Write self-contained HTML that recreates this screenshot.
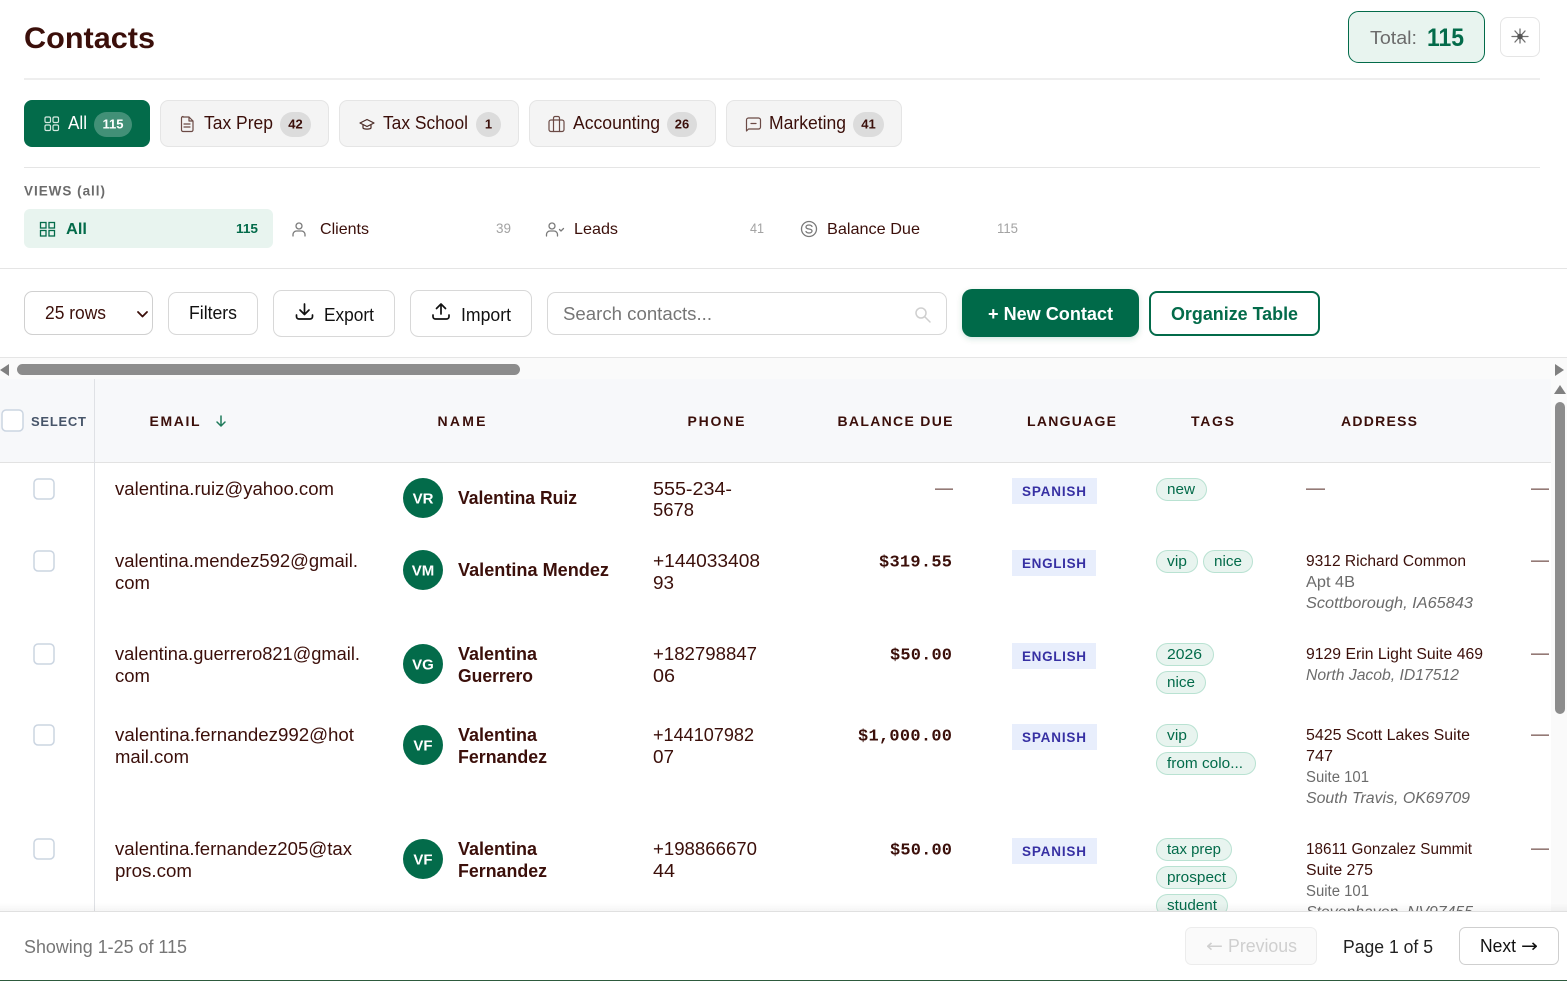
<!DOCTYPE html>
<html lang="en"><head><meta charset="utf-8"><title>Contacts</title>
<style>
html,body{margin:0;padding:0;background:#fff;width:1567px;height:981px;overflow:hidden}
svg{display:block}
text{font-family:"Liberation Sans",Arial,sans-serif;fill:#3b0f0a;font-size:18px;white-space:pre}
.b{font-weight:700}
.m{font-family:"Liberation Mono",monospace;font-weight:700;font-size:17px}
.h{font-weight:700;font-size:14px}
.t{font-size:14.5px;fill:#036b4a}
.l{font-weight:700;font-size:13.5px;fill:#3730a3}
.a{font-size:15.5px}
.g{fill:#6b6b6b}
.i{font-style:italic;fill:#6b6b6b}
.n{font-size:14px;fill:#a3a3a3}
.c{font-weight:700;font-size:13px;text-anchor:middle}
.av{font-weight:700;font-size:15px;fill:#fff;text-anchor:middle}
.ic{fill:none;stroke-linecap:round;stroke-linejoin:round}
</style></head><body>
<svg width="1567" height="981" viewBox="0 0 1567 981" xmlns="http://www.w3.org/2000/svg">
<defs><linearGradient id="fs" x1="0" y1="0" x2="0" y2="1"><stop offset="0" stop-color="#000" stop-opacity="0"/><stop offset="1" stop-color="#000" stop-opacity=".04"/></linearGradient>
<filter id="sh" x="-10%" y="-20%" width="120%" height="150%"><feDropShadow dx="0" dy="2" stdDeviation="3" flood-color="#036b4a" flood-opacity=".18"/></filter></defs>

<!-- Header -->
<text x="24" y="48" class="b" style="font-size:30px" textLength="131" lengthAdjust="spacingAndGlyphs">Contacts</text>
<rect x="1348.500" y="11.500" width="136" height="51" rx="10" fill="#e8f4ef" stroke="#036b4a"/>
<text x="1370" y="44" class="g" textLength="47" lengthAdjust="spacingAndGlyphs">Total:</text>
<text x="1427" y="46" class="b" style="font-size:25px;fill:#036b4a" textLength="37" lengthAdjust="spacingAndGlyphs">115</text>
<rect x="1500.500" y="17.500" width="39" height="39" rx="7" fill="#fff" stroke="#e5e5e5"/>
<g class="ic" stroke="#707070" stroke-width="1.300"><path d="M1520 29v14M1512 36.500h16M1515 31l10 11M1525 31l-10 11"/></g><circle cx="1520" cy="36.500" r="2.800" fill="#555"/>
<rect x="24" y="78" width="1516" height="2" fill="#eeeeee"/>

<!-- Tabs -->
<rect x="24" y="100" width="126" height="47" rx="8" fill="#036b4a"/>
<g class="ic" stroke="#d5e9e1" stroke-width="1.200"><rect x="45" y="117" width="5.500" height="5.500" rx="1.400"/><rect x="53" y="117" width="5.500" height="5.500" rx="1.400"/><rect x="45" y="125" width="5.500" height="5.500" rx="1.400"/><rect x="53" y="125" width="5.500" height="5.500" rx="1.400"/></g>
<text x="68" y="129" style="fill:#fff" textLength="19" lengthAdjust="spacingAndGlyphs">All</text>
<rect x="94" y="112" width="38" height="25" rx="12.500" fill="#fff" fill-opacity=".25"/>
<text x="113" y="128.500" class="c" style="fill:#fff">115</text>

<rect x="160.500" y="100.500" width="168" height="46" rx="8" fill="#f4f4f4" stroke="#e5e5e5"/>
<g class="ic" stroke="#6b4a45" stroke-width="1.200"><path d="M183 117h6l4 4v9a1.500 1.500 0 0 1-1.500 1.500h-8.500a1.500 1.500 0 0 1-1.500-1.500v-12a1.500 1.500 0 0 1 1.500-1.500zM189 117v4h4M184 124h6M184 127h6"/></g>
<text x="204" y="129" textLength="69" lengthAdjust="spacingAndGlyphs">Tax Prep</text>
<rect x="280" y="112" width="31" height="25" rx="12.500" fill="#dcdcdc"/><text x="295.500" y="128.500" class="c">42</text>

<rect x="339.500" y="100.500" width="179" height="46" rx="8" fill="#f4f4f4" stroke="#e5e5e5"/>
<g class="ic" stroke="#4a2a25" stroke-width="1.200"><path d="M360 123l7-3.500 7 3.500-7 3.500zM363 125v3c1 1.500 7 1.500 8 0v-3"/></g>
<text x="383" y="129" textLength="85" lengthAdjust="spacingAndGlyphs">Tax School</text>
<rect x="476" y="112" width="25" height="25" rx="12.500" fill="#dcdcdc"/><text x="488.500" y="128.500" class="c">1</text>

<rect x="529.500" y="100.500" width="186" height="46" rx="8" fill="#f4f4f4" stroke="#e5e5e5"/>
<g class="ic" stroke="#6b4a45" stroke-width="1.200"><rect x="549" y="120" width="15" height="11.500" rx="2"/><path d="M553.500 120v11.500M559.500 120v11.500M553.500 120v-2a1.500 1.500 0 0 1 1.500-1.500h3a1.500 1.500 0 0 1 1.500 1.500v2"/></g>
<text x="573" y="129" textLength="87" lengthAdjust="spacingAndGlyphs">Accounting</text>
<rect x="667" y="112" width="30" height="25" rx="12.500" fill="#dcdcdc"/><text x="682" y="128.500" class="c">26</text>

<rect x="726.500" y="100.500" width="175" height="46" rx="8" fill="#f4f4f4" stroke="#e5e5e5"/>
<g class="ic" stroke="#6b4a45" stroke-width="1.200"><path d="M748.500 118h10a2 2 0 0 1 2 2v7a2 2 0 0 1-2 2h-10l-2 2v-11a2 2 0 0 1 2-2zM751 123.500h5"/></g>
<text x="769" y="129" textLength="77" lengthAdjust="spacingAndGlyphs">Marketing</text>
<rect x="853" y="112" width="31" height="25" rx="12.500" fill="#dcdcdc"/><text x="868.500" y="128.500" class="c">41</text>

<rect x="24" y="167" width="1516" height="1" fill="#e5e5e5"/>

<!-- Views -->
<text x="24" y="195.500" class="b g" style="font-size:13.500px" textLength="81" lengthAdjust="spacing">VIEWS (all)</text>
<rect x="24" y="209" width="249" height="39" rx="6" fill="#e8f4ef"/>
<g fill="none" stroke="#036b4a" stroke-width="1.300"><rect x="40.500" y="222.500" width="5.500" height="5.500"/><rect x="49" y="222.500" width="5.500" height="5.500"/><rect x="40.500" y="230.500" width="5.500" height="5.500"/><rect x="49" y="230.500" width="5.500" height="5.500"/></g>
<text x="66" y="234" class="b" style="font-size:16px;fill:#036b4a" textLength="21" lengthAdjust="spacingAndGlyphs">All</text>
<text x="236" y="233" class="b" style="font-size:13px;fill:#036b4a" textLength="22" lengthAdjust="spacingAndGlyphs">115</text>
<g class="ic" stroke="#7a7a7a" stroke-width="1.300"><circle cx="299" cy="226" r="3"/><path d="M293 236v-1.500a3.500 3.500 0 0 1 3.500-3.500h5a3.500 3.500 0 0 1 3.500 3.500v1.500"/></g>
<text x="320" y="234" style="font-size:16px" textLength="49" lengthAdjust="spacingAndGlyphs">Clients</text>
<text x="496" y="233" class="n" textLength="15" lengthAdjust="spacingAndGlyphs">39</text>
<g class="ic" stroke="#7a7a7a" stroke-width="1.300"><circle cx="552" cy="226" r="3"/><path d="M546.500 236v-1.500a3.500 3.500 0 0 1 3.500-3.500h4a3.500 3.500 0 0 1 3.500 3.500v1.500M559.500 229.500l1.500 1.500 2.500-2.500"/></g>
<text x="574" y="234" style="font-size:16px" textLength="44" lengthAdjust="spacingAndGlyphs">Leads</text>
<text x="750" y="233" class="n" textLength="14" lengthAdjust="spacingAndGlyphs">41</text>
<g class="ic" stroke="#7a7a7a" stroke-width="1.300"><circle cx="809" cy="229" r="7.500"/><path d="M812 226.500c-.5-1-1.500-1.500-3-1.500-1.700 0-3 .8-3 2s1.300 1.800 3 2 3 .8 3 2-1.300 2-3 2c-1.500 0-2.500-.5-3-1.500"/></g>
<text x="827" y="234" style="font-size:16px" textLength="93" lengthAdjust="spacingAndGlyphs">Balance Due</text>
<text x="997" y="233" class="n" textLength="21" lengthAdjust="spacingAndGlyphs">115</text>
<rect x="0" y="268" width="1567" height="1" fill="#e5e5e5"/>

<!-- Toolbar -->
<rect x="24.500" y="291.500" width="128" height="43" rx="8" fill="#fff" stroke="#d0d0d0"/>
<text x="45" y="319" textLength="61" lengthAdjust="spacingAndGlyphs">25 rows</text>
<path class="ic" d="M138 312l4.500 4.500 4.500-4.500" stroke="#3b0f0a" stroke-width="1.800"/>
<rect x="168.500" y="292.500" width="89" height="42" rx="8" fill="#fff" stroke="#d8d8d8"/>
<text x="189" y="319" style="fill:#111" textLength="48" lengthAdjust="spacingAndGlyphs">Filters</text>
<rect x="273.500" y="290.500" width="121" height="46" rx="8" fill="#fff" stroke="#d8d8d8"/>
<g class="ic" stroke="#111" stroke-width="1.700"><path d="M304.500 304v10M300 310l4.500 4.500 4.500-4.500M296.500 315v1.500c0 1.500 1 2.500 2.500 2.500h11c1.500 0 2.500-1 2.500-2.500v-1.500"/></g>
<text x="324" y="321" style="fill:#111" textLength="50" lengthAdjust="spacingAndGlyphs">Export</text>
<rect x="410.500" y="290.500" width="121" height="46" rx="8" fill="#fff" stroke="#d8d8d8"/>
<g class="ic" stroke="#111" stroke-width="1.700"><path d="M441 314v-10M436.500 308.500l4.500-4.500 4.500 4.500M433 315v1.500c0 1.500 1 2.500 2.500 2.500h11c1.500 0 2.500-1 2.500-2.500v-1.500"/></g>
<text x="461" y="321" style="fill:#111" textLength="50" lengthAdjust="spacingAndGlyphs">Import</text>
<rect x="547.500" y="292.500" width="399" height="42" rx="8" fill="#fff" stroke="#d8d8d8"/>
<text x="563" y="320" style="fill:#767676" textLength="149" lengthAdjust="spacingAndGlyphs">Search contacts...</text>
<g class="ic" stroke="#cfcfcf" stroke-width="1.500"><circle cx="921" cy="313" r="5"/><path d="M925 317l5 5"/></g>
<rect x="962" y="289" width="177" height="48" rx="10" fill="#036b4a" filter="url(#sh)"/>
<text x="988" y="320" class="b" style="fill:#fff" textLength="125" lengthAdjust="spacingAndGlyphs">+ New Contact</text>
<rect x="1150" y="292" width="169" height="43" rx="7" fill="#fff" stroke="#036b4a" stroke-width="2"/>
<text x="1171" y="320" class="b" style="fill:#036b4a" textLength="127" lengthAdjust="spacingAndGlyphs">Organize Table</text>
<rect x="0" y="357" width="1567" height="1" fill="#e5e5e5"/>

<!-- Scroll bars -->
<rect x="0" y="358" width="1567" height="21" fill="#fafafa"/>
<rect x="1551" y="379" width="16" height="532" fill="#fafafa"/>
<rect x="17" y="364" width="503" height="11" rx="5.500" fill="#8c8c8c"/>
<path d="M0 370l9-6v12z" fill="#808080"/><path d="M1564 370l-9-6v12z" fill="#808080"/>
<path d="M1560 385l6 9h-12z" fill="#808080"/>
<rect x="1555" y="402" width="10" height="312" rx="5" fill="#8c8c8c"/>

<!-- Table head -->
<rect x="0" y="379" width="1551" height="83" fill="#f7f8fa"/>
<rect x="0" y="462" width="1551" height="1" fill="#e2e2e2"/>
<rect x="94" y="379" width="1" height="532" fill="#dfe1e5"/>
<rect x="2" y="410" width="21" height="21" rx="4" fill="#fff" stroke="#cbd5e1" stroke-width="1.500"/>
<text x="31" y="426" class="b" style="font-size:13px;fill:#475569" textLength="55" lengthAdjust="spacing">SELECT</text>
<text x="149.500" y="426" class="h" textLength="50" lengthAdjust="spacing">EMAIL</text>
<path class="ic" d="M221 416v10M217 422l4 4 4-4" stroke="#1f7a5a" stroke-width="1.500"/>
<text x="437.500" y="426" class="h" textLength="48" lengthAdjust="spacing">NAME</text>
<text x="687.500" y="426" class="h" textLength="57" lengthAdjust="spacing">PHONE</text>
<text x="837.500" y="426" class="h" textLength="115" lengthAdjust="spacing">BALANCE DUE</text>
<text x="1027" y="426" class="h" textLength="89" lengthAdjust="spacing">LANGUAGE</text>
<text x="1191" y="426" class="h" textLength="43" lengthAdjust="spacing">TAGS</text>
<text x="1341" y="426" class="h" textLength="76" lengthAdjust="spacing">ADDRESS</text>

<!-- Row 1 -->
<rect x="34" y="479" width="20" height="20" rx="4" fill="#fff" stroke="#cbd5e1" stroke-width="1.500"/>
<text x="115" y="495" textLength="219" lengthAdjust="spacingAndGlyphs">valentina.ruiz@yahoo.com</text>
<circle cx="423" cy="498" r="20" fill="#036b4a"/><text x="423" y="503.500" class="av">VR</text>
<text x="458" y="504" class="b" textLength="119" lengthAdjust="spacingAndGlyphs">Valentina Ruiz</text>
<text x="653" y="495" textLength="79" lengthAdjust="spacingAndGlyphs">555-234-</text>
<text x="653" y="516" textLength="41" lengthAdjust="spacingAndGlyphs">5678</text>
<rect x="935" y="488.500" width="18" height="1.300" fill="#7a5a55"/>
<rect x="1012" y="478" width="85" height="26" fill="#e8eefc"/>
<text x="1022" y="496" class="l" textLength="64" lengthAdjust="spacing">SPANISH</text>
<rect x="1156.500" y="478.500" width="50" height="22" rx="11" fill="#e8f4ef" stroke="#b9e2d2"/>
<text x="1167" y="494" class="t" textLength="28" lengthAdjust="spacingAndGlyphs">new</text>
<rect x="1306" y="488.500" width="19" height="1.300" fill="#7a5a55"/>
<rect x="1531" y="488.500" width="18" height="1.300" fill="#7a5a55"/>

<!-- Row 2 -->
<rect x="34" y="551" width="20" height="20" rx="4" fill="#fff" stroke="#cbd5e1" stroke-width="1.500"/>
<text x="115" y="567" textLength="243" lengthAdjust="spacingAndGlyphs">valentina.mendez592@gmail.</text>
<text x="115" y="589" textLength="35" lengthAdjust="spacingAndGlyphs">com</text>
<circle cx="423" cy="570" r="20" fill="#036b4a"/><text x="423" y="575.500" class="av">VM</text>
<text x="458" y="576" class="b" textLength="151" lengthAdjust="spacingAndGlyphs">Valentina Mendez</text>
<text x="653" y="567" textLength="107" lengthAdjust="spacingAndGlyphs">+144033408</text>
<text x="653" y="589" textLength="21" lengthAdjust="spacingAndGlyphs">93</text>
<text x="879" y="566.500" class="m" textLength="73">$319.55</text>
<rect x="1012" y="550" width="84" height="26" fill="#e8eefc"/>
<text x="1022" y="568" class="l" textLength="64" lengthAdjust="spacing">ENGLISH</text>
<rect x="1156.500" y="550.500" width="41" height="22" rx="11" fill="#e8f4ef" stroke="#b9e2d2"/>
<text x="1167" y="566" class="t" textLength="20" lengthAdjust="spacingAndGlyphs">vip</text>
<rect x="1203.500" y="550.500" width="49" height="22" rx="11" fill="#e8f4ef" stroke="#b9e2d2"/>
<text x="1214" y="566" class="t" textLength="28" lengthAdjust="spacingAndGlyphs">nice</text>
<text x="1306" y="566" class="a" textLength="160" lengthAdjust="spacingAndGlyphs">9312 Richard Common</text>
<text x="1306" y="587" class="a g" textLength="49" lengthAdjust="spacingAndGlyphs">Apt 4B</text>
<text x="1306" y="608" class="a i" textLength="167" lengthAdjust="spacingAndGlyphs">Scottborough, IA65843</text>
<rect x="1531" y="560.500" width="18" height="1.300" fill="#7a5a55"/>

<!-- Row 3 -->
<rect x="34" y="644" width="20" height="20" rx="4" fill="#fff" stroke="#cbd5e1" stroke-width="1.500"/>
<text x="115" y="660" textLength="245" lengthAdjust="spacingAndGlyphs">valentina.guerrero821@gmail.</text>
<text x="115" y="682" textLength="35" lengthAdjust="spacingAndGlyphs">com</text>
<circle cx="423" cy="664" r="20" fill="#036b4a"/><text x="423" y="669.500" class="av">VG</text>
<text x="458" y="660" class="b" textLength="79" lengthAdjust="spacingAndGlyphs">Valentina</text>
<text x="458" y="682" class="b" textLength="75" lengthAdjust="spacingAndGlyphs">Guerrero</text>
<text x="653" y="660" textLength="104" lengthAdjust="spacingAndGlyphs">+182798847</text>
<text x="653" y="682" textLength="22" lengthAdjust="spacingAndGlyphs">06</text>
<text x="890" y="659.500" class="m" textLength="62">$50.00</text>
<rect x="1012" y="643" width="84" height="26" fill="#e8eefc"/>
<text x="1022" y="661" class="l" textLength="64" lengthAdjust="spacing">ENGLISH</text>
<rect x="1156.500" y="643.500" width="57" height="22" rx="11" fill="#e8f4ef" stroke="#b9e2d2"/>
<text x="1167" y="659" class="t" textLength="35" lengthAdjust="spacingAndGlyphs">2026</text>
<rect x="1156.500" y="671.500" width="49" height="22" rx="11" fill="#e8f4ef" stroke="#b9e2d2"/>
<text x="1167" y="687" class="t" textLength="28" lengthAdjust="spacingAndGlyphs">nice</text>
<text x="1306" y="659" class="a" textLength="177" lengthAdjust="spacingAndGlyphs">9129 Erin Light Suite 469</text>
<text x="1306" y="680" class="a i" textLength="153" lengthAdjust="spacingAndGlyphs">North Jacob, ID17512</text>
<rect x="1531" y="653.500" width="18" height="1.300" fill="#7a5a55"/>

<!-- Row 4 -->
<rect x="34" y="725" width="20" height="20" rx="4" fill="#fff" stroke="#cbd5e1" stroke-width="1.500"/>
<text x="115" y="741" textLength="239" lengthAdjust="spacingAndGlyphs">valentina.fernandez992@hot</text>
<text x="115" y="763" textLength="74" lengthAdjust="spacingAndGlyphs">mail.com</text>
<circle cx="423" cy="745" r="20" fill="#036b4a"/><text x="423" y="750.500" class="av">VF</text>
<text x="458" y="741" class="b" textLength="79" lengthAdjust="spacingAndGlyphs">Valentina</text>
<text x="458" y="763" class="b" textLength="89" lengthAdjust="spacingAndGlyphs">Fernandez</text>
<text x="653" y="741" textLength="101" lengthAdjust="spacingAndGlyphs">+144107982</text>
<text x="653" y="763" textLength="21" lengthAdjust="spacingAndGlyphs">07</text>
<text x="858" y="740.500" class="m" textLength="94">$1,000.00</text>
<rect x="1012" y="724" width="85" height="26" fill="#e8eefc"/>
<text x="1022" y="742" class="l" textLength="64" lengthAdjust="spacing">SPANISH</text>
<rect x="1156.500" y="724.500" width="41" height="22" rx="11" fill="#e8f4ef" stroke="#b9e2d2"/>
<text x="1167" y="740" class="t" textLength="20" lengthAdjust="spacingAndGlyphs">vip</text>
<rect x="1156.500" y="752.500" width="99" height="22" rx="11" fill="#e8f4ef" stroke="#b9e2d2"/>
<text x="1167" y="768" class="t" textLength="76" lengthAdjust="spacingAndGlyphs">from colo...</text>
<text x="1306" y="740" class="a" textLength="164" lengthAdjust="spacingAndGlyphs">5425 Scott Lakes Suite</text>
<text x="1306" y="761" class="a" textLength="27" lengthAdjust="spacingAndGlyphs">747</text>
<text x="1306" y="782" class="a g" textLength="63" lengthAdjust="spacingAndGlyphs">Suite 101</text>
<text x="1306" y="803" class="a i" textLength="164" lengthAdjust="spacingAndGlyphs">South Travis, OK69709</text>
<rect x="1531" y="734.500" width="18" height="1.300" fill="#7a5a55"/>

<!-- Row 5 -->
<rect x="34" y="839" width="20" height="20" rx="4" fill="#fff" stroke="#cbd5e1" stroke-width="1.500"/>
<text x="115" y="855" textLength="237" lengthAdjust="spacingAndGlyphs">valentina.fernandez205@tax</text>
<text x="115" y="877" textLength="77" lengthAdjust="spacingAndGlyphs">pros.com</text>
<circle cx="423" cy="859" r="20" fill="#036b4a"/><text x="423" y="864.500" class="av">VF</text>
<text x="458" y="855" class="b" textLength="79" lengthAdjust="spacingAndGlyphs">Valentina</text>
<text x="458" y="877" class="b" textLength="89" lengthAdjust="spacingAndGlyphs">Fernandez</text>
<text x="653" y="855" textLength="104" lengthAdjust="spacingAndGlyphs">+198866670</text>
<text x="653" y="877" textLength="22" lengthAdjust="spacingAndGlyphs">44</text>
<text x="890" y="854.500" class="m" textLength="62">$50.00</text>
<rect x="1012" y="838" width="85" height="26" fill="#e8eefc"/>
<text x="1022" y="856" class="l" textLength="64" lengthAdjust="spacing">SPANISH</text>
<rect x="1156.500" y="838.500" width="75" height="22" rx="11" fill="#e8f4ef" stroke="#b9e2d2"/>
<text x="1167" y="854" class="t" textLength="54" lengthAdjust="spacingAndGlyphs">tax prep</text>
<rect x="1156.500" y="866.500" width="80" height="22" rx="11" fill="#e8f4ef" stroke="#b9e2d2"/>
<text x="1167" y="882" class="t" textLength="59" lengthAdjust="spacingAndGlyphs">prospect</text>
<rect x="1156.500" y="894.500" width="71" height="22" rx="11" fill="#e8f4ef" stroke="#b9e2d2"/>
<text x="1167" y="910" class="t" textLength="50" lengthAdjust="spacingAndGlyphs">student</text>
<text x="1306" y="854" class="a" textLength="166" lengthAdjust="spacingAndGlyphs">18611 Gonzalez Summit</text>
<text x="1306" y="875" class="a" textLength="67" lengthAdjust="spacingAndGlyphs">Suite 275</text>
<text x="1306" y="896" class="a g" textLength="63" lengthAdjust="spacingAndGlyphs">Suite 101</text>
<text x="1306" y="917" class="a i" textLength="167" lengthAdjust="spacingAndGlyphs">Stevenhaven, NV97455</text>
<rect x="1531" y="848.500" width="18" height="1.300" fill="#7a5a55"/>

<!-- Footer -->
<rect x="0" y="903" width="1567" height="8" fill="url(#fs)"/>
<rect x="0" y="911" width="1567" height="70" fill="#fff"/>
<rect x="0" y="911" width="1567" height="1" fill="#e0e0e0"/>
<text x="24" y="953" style="fill:#767676" textLength="163" lengthAdjust="spacingAndGlyphs">Showing 1-25 of 115</text>
<rect x="1185.500" y="927.500" width="131" height="37" rx="6" fill="#fafafa" stroke="#ececec"/>
<text x="1206" y="952" style="font-family:'DejaVu Sans',sans-serif;fill:#cfcfcf" textLength="17" lengthAdjust="spacingAndGlyphs">←</text>
<text x="1228" y="952" style="fill:#cfcfcf" textLength="69" lengthAdjust="spacingAndGlyphs">Previous</text>
<text x="1343" y="953" style="fill:#222" textLength="90" lengthAdjust="spacingAndGlyphs">Page 1 of 5</text>
<rect x="1459.500" y="927.500" width="99" height="37" rx="6" fill="#fff" stroke="#cfcfcf"/>
<text x="1480" y="952" style="fill:#111" textLength="36" lengthAdjust="spacingAndGlyphs">Next</text>
<text x="1521" y="952" style="font-family:'DejaVu Sans',sans-serif;fill:#111" textLength="17" lengthAdjust="spacingAndGlyphs">→</text>
<rect x="0" y="980" width="1567" height="1" fill="#2d5a3d"/>
</svg>
</body></html>
